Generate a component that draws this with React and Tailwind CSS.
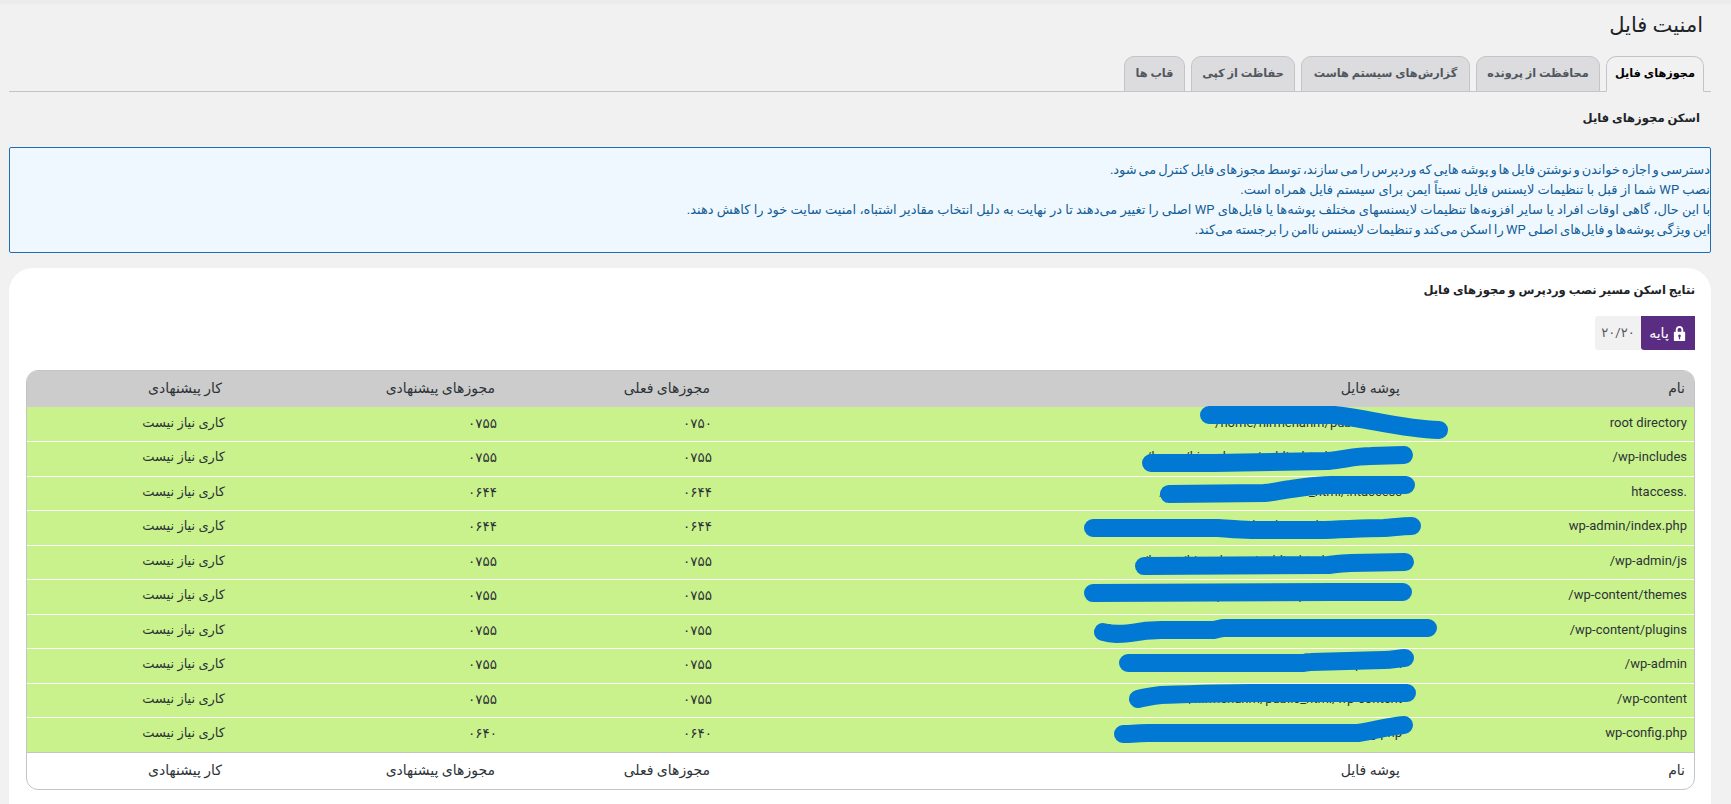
import React from "react";

const tabs = [
  { label: "مجوزهای فایل", w: "w-[98px]", active: true },
  { label: "محافظت از پرونده", w: "w-[124px]" },
  { label: "گزارش‌های سیستم هاست", w: "w-[169px]" },
  { label: "حفاظت از کپی", w: "w-[104px]" },
  { label: "قاب ها", w: "w-[61px]" },
];

const rows = [
  ["root directory", "/home/hirmehanm/public_html/", "۰۷۵۰", "۰۷۵۵"],
  ["wp-includes/", "home/hirmehanm/public_html/wp-includes/", "۰۷۵۵", "۰۷۵۵"],
  [".htaccess", "home/hirmehanm/public_html/.htaccess/", "۰۶۴۴", "۰۶۴۴"],
  ["wp-admin/index.php", "home/hirmehanm/public_html/wp-admin/index.php/", "۰۶۴۴", "۰۶۴۴"],
  ["wp-admin/js/", "home/hirmehanm/public_html/wp-admin/js/", "۰۷۵۵", "۰۷۵۵"],
  ["wp-content/themes/", "home/hirmehanm/public_html/wp-content/themes/", "۰۷۵۵", "۰۷۵۵"],
  ["wp-content/plugins/", "home/hirmehanm/public_html/wp-content/plugins/", "۰۷۵۵", "۰۷۵۵"],
  ["wp-admin/", "home/hirmehanm/public_html/wp-admin/", "۰۷۵۵", "۰۷۵۵"],
  ["wp-content/", "home/hirmehanm/public_html/wp-content/", "۰۷۵۵", "۰۷۵۵"],
  ["wp-config.php", "home/hirmehanm/public_html/wp-config.php/", "۰۶۴۰", "۰۶۴۰"],
];

const heads = ["نام", "پوشه فایل", "مجوزهای فعلی", "مجوزهای پیشنهادی", "کار پیشنهادی"];

const scribbles = [
  "M1208 414 L1333 414 C1370 418 1400 428 1438 429",
  "M1150 462 L1213 462 L1327 460 C1345 458 1355 455 1370 455 L1403 454",
  "M1168 493 L1263 492 C1275 491 1280 489 1290 488 C1305 486 1315 484 1330 484 L1405 484",
  "M1092 527 L1217 527 C1230 528 1240 529 1250 529 L1317 529 C1350 528 1365 527 1383 527 C1395 526 1403 525 1411 525",
  "M1143 565 L1327 564 C1335 563 1342 562 1350 562 L1404 561",
  "M1092 592 L1333 591 L1402 591",
  "M1102 631 C1112 634 1120 633 1130 632 C1140 630 1150 629 1160 629 L1213 629 C1218 628 1220 627 1223 627 L1427 627",
  "M1127 662 L1303 662 C1306 661 1308 661 1310 661 L1383 659 C1392 659 1398 657 1404 657",
  "M1137 698 C1145 696 1152 695 1160 694 C1190 693 1220 692 1250 692 L1406 692",
  "M1122 733 C1130 733 1140 732 1147 732 L1357 732 C1375 729 1390 725 1403 724",
];

function LockIcon() {
  return (
    <svg viewBox="0 0 16 18" className="w-[15px] h-[17px] shrink-0" fill="#fff" aria-hidden="true">
      <path fillRule="evenodd" d="M4 7V4.8C4 2.6 5.8 1 8 1s4 1.6 4 3.8V7h1.2c.6 0 .8.3.8.8v8.4c0 .5-.2.8-.8.8H2.800c-.6 0-.8-.3-.8-.8V7.800c0-.5.2-.8.8-.8H4Zm2 0h4V4.800C10 3.700 9.100 3 8 3s-2 .7-2 1.800V7Zm2 3a1.500 1.500 0 0 0-.7 2.800V15h1.400v-2.200A1.500 1.500 0 0 0 8 10Z" />
    </svg>
  );
}

export default function App() {
  return (
    <div
      dir="rtl"
      className="h-screen overflow-hidden border-t-[4px] border-[#ececec] bg-[#f1f1f1] pr-[20px] pl-[9px] text-[13px] leading-5 text-[#2c3338] font-['Roboto','DejaVu_Sans',sans-serif]"
    >
      <h1 className="pt-[8px] pr-[8px] text-[21px] leading-[27px] font-normal text-[#1d2327]">امنیت فایل</h1>

      <div className="mt-[17px] flex h-[36px] gap-[6px] border-b border-[#c3c4c7] pr-[7px]">
        {tabs.map((t) => (
          <div
            key={t.label}
            className={
              t.w +
              " flex h-[36px] items-center justify-center rounded-t-[10px] border border-[#c3c4c7] text-[11.3px] font-bold " +
              (t.active
                ? "border-b-[#f1f1f1] bg-[#f1f1f1] text-[#000]"
                : "bg-[#dcdcde] text-[#50575e]")
            }
          >
            {t.label}
          </div>
        ))}
      </div>

      <h2 className="mt-[16px] pr-[11px] text-[11.6px] leading-5 font-bold text-[#1d2327]">اسکن مجوزهای فایل</h2>

      <div className="mt-[19px] h-[106px] rounded-[2px] border border-[#1f6fb0] bg-[#f0f8ff] pt-[12px] text-[#135e96]">
        <p className="[word-spacing:-1.4px]">دسترسی و اجازه خواندن و نوشتن فایل ها و پوشه هایی که وردپرس را می سازند، توسط مجوزهای فایل کنترل می شود.</p>
        <p>نصب WP شما از قبل با تنظیمات لایسنس فایل نسبتاً ایمن برای سیستم فایل همراه است.</p>
        <p>با این حال، گاهی اوقات افراد یا سایر افزونه‌ها تنظیمات لایسنسهای مختلف پوشه‌ها یا فایل‌های WP اصلی را تغییر می‌دهند تا در نهایت به دلیل انتخاب مقادیر اشتباه، امنیت سایت خود را کاهش دهند.</p>
        <p className="[word-spacing:-1px]">این ویژگی پوشه‌ها و فایل‌های اصلی WP را اسکن می‌کند و تنظیمات لایسنس ناامن را برجسته می‌کند.</p>
      </div>

      <section className="mt-[15px] h-[560px] rounded-t-[24px] bg-white px-[16px] pt-[12px]">
        <h3 className="text-[11.6px] leading-5 font-bold text-[#1d2327]">نتایج اسکن مسیر نصب وردپرس و مجوزهای فایل</h3>

        <div className="mt-[16px] flex h-[34px]">
          <div className="flex w-[54px] items-center justify-center gap-[3px] rounded-bl-[3px] bg-[#5a2d82] text-[14px] text-white">
            <LockIcon />
            <span>پایه</span>
          </div>
          <div className="flex w-[46px] items-center justify-center rounded-l-[3px] bg-[#f1f1f1] text-[13px] text-[#50575e]">۲۰/۲۰</div>
        </div>

        <div className="relative mt-[20px] w-[1669px] overflow-hidden rounded-[12px] border border-[#c3c4c7] bg-white">
          <table className="w-full table-fixed border-collapse text-[#2c3338]">
            <colgroup>
              <col className="w-[285px]" />
              <col className="w-[690px]" />
              <col className="w-[215px]" />
              <col className="w-[273px]" />
              <col />
            </colgroup>
            <thead>
              <tr className="h-[36px] bg-[#cccccc]">
                {heads.map((h) => (
                  <th key={h} className="pr-[9px] pb-[2px] text-right text-[14px] font-normal">{h}</th>
                ))}
              </tr>
            </thead>
            <tbody>
              {rows.map((r) => (
                <tr key={r[0]} className="h-[34.5px] border-b border-white last:border-b-0 bg-[#caf28c]">
                  <td className="pr-[7px] pb-[3px]">{r[0]}</td>
                  <td className="pr-[7px] pb-[3px]">{r[1]}</td>
                  <td className="pr-[7px] pb-[3px] text-[13.5px]">{r[2]}</td>
                  <td className="pr-[7px] pb-[3px] text-[13.5px]">{r[3]}</td>
                  <td className="pr-[6px] pb-[3px]">کاری نیاز نیست</td>
                </tr>
              ))}
            </tbody>
            <tfoot>
              <tr className="h-[37px] border-t border-[#c3c4c7]">
                {heads.map((h) => (
                  <th key={h} className="pr-[9px] pb-[2px] text-right text-[14px] font-normal">{h}</th>
                ))}
              </tr>
            </tfoot>
          </table>
          <svg
            viewBox="1000 370 440 420"
            className="pointer-events-none absolute top-0 left-[974px] h-[420px] w-[440px] overflow-visible"
            fill="none"
            stroke="#0078d4"
            strokeWidth="18"
            strokeLinecap="round"
            strokeLinejoin="round"
            aria-hidden="true"
          >
            {scribbles.map((d) => (
              <path key={d} d={d} />
            ))}
          </svg>
        </div>
      </section>
    </div>
  );
}
